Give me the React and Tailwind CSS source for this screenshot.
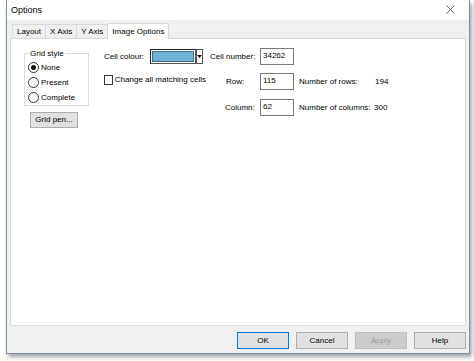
const font = { fontFamily: '"Liberation Sans", Arial, sans-serif' };

function Radio({ label, checked }) {
  return (
    <div className="flex items-center h-[15px] gap-[2px]">
      <span className="w-[11px] h-[11px] rounded-full border border-[#333] bg-white flex items-center justify-center">
        {checked && <span className="w-[5px] h-[5px] rounded-full bg-[#111]" />}
      </span>
      <span>{label}</span>
    </div>
  );
}

function Field({ value }) {
  return (
    <div className="w-[34px] h-[17px] border border-[#7a7a7a] bg-white px-[2px] pt-[1px] leading-[11px]">
      {value}
    </div>
  );
}

function Btn({ children, primary, disabled }) {
  return (
    <div
      className={
        'w-[52px] h-[17px] flex items-center justify-center border ' +
        (primary
          ? 'border-[#0078d7] bg-[#e1e1e1] text-black'
          : disabled
          ? 'border-[#bfbfbf] bg-[#cccccc] text-[#9a9a9a]'
          : 'border-[#adadad] bg-[#e1e1e1] text-black')
      }
    >
      {children}
    </div>
  );
}

export default function App() {
  return (
    <div className="w-[474px] h-[361px] bg-white text-[8px] text-black whitespace-nowrap" style={font}>
      <div className="ml-[6px] w-[464px] h-[354px] flex flex-col border-x border-b border-[#7590b5] shadow-[2px_3px_4px_rgba(0,0,0,0.35)]">
        {/* title bar */}
        <div className="h-[20px] bg-white flex items-start justify-between pl-[4px] pr-[14px] pt-[4px]">
          <span className="text-[9px]">Options</span>
          <svg width="9" height="9" viewBox="0 0 9 9" className="mt-[1px]">
            <path d="M0.5 0.5L8.5 8.5M8.5 0.5L0.5 8.5" stroke="#555" strokeWidth="0.9" />
          </svg>
        </div>

        <div className="flex-1 bg-[#f0f0f0] flex flex-col px-[3px]">
          {/* tabs */}
          <div className="h-[18px] flex items-end pl-[2px]">
            <div className="h-[14px] px-[4px] border border-b-0 border-[#d9d9d9] bg-[#f0f0f0] flex items-center">Layout</div>
            <div className="h-[14px] px-[4px] border border-b-0 border-l-0 border-[#d9d9d9] bg-[#f0f0f0] flex items-center">X Axis</div>
            <div className="h-[14px] px-[4px] border border-b-0 border-l-0 border-[#d9d9d9] bg-[#f0f0f0] flex items-center">Y Axis</div>
            <div className="h-[16px] px-[4px] border border-b-0 border-l-0 border-[#d9d9d9] bg-white flex items-center -mb-px relative z-10">Image Options</div>
          </div>

          {/* panel */}
          <div className="h-[288px] w-[456px] bg-white border border-[#d9d9d9] flex pt-[9px]">
            {/* left column */}
            <div className="ml-[13px] w-[66px] flex flex-col">
              <div className="relative mt-[5px] w-[65px] h-[53px] border border-[#dcdcdc] pt-[6px] pl-[3px]">
                <span className="absolute -top-[6px] left-[4px] bg-white px-[1px]">Grid style</span>
                <Radio label="None" checked />
                <Radio label="Present" />
                <Radio label="Complete" />
              </div>
              <div className="ml-[6px] mt-[6px] w-[48px] h-[16px] border border-[#adadad] bg-[#e1e1e1] flex items-center justify-center">
                Grid pen...
              </div>
            </div>

            {/* middle column */}
            <div className="ml-[14px] w-[102px] flex flex-col">
              <div className="h-[17px] flex items-center">
                <span className="w-[46px]">Cell colour:</span>
                <div className="w-[46px] h-[15px] border border-[#555] border-t-[#222] border-l-[#222] p-[1px] bg-white">
                  <div className="w-full h-full bg-[#6eb2d6] border border-[#3d6f8e]" />
                </div>
                <div className="w-[7px] h-[15px] border border-[#555] bg-white flex items-center justify-center">
                  <svg width="5" height="3" viewBox="0 0 5 3"><path d="M0 0h5L2.5 3z" fill="#111" /></svg>
                </div>
              </div>
              <div className="mt-[9px] h-[12px] flex items-center gap-[2px]">
                <span className="w-[10px] h-[10px] border border-[#333] bg-white" />
                <span>Change all matching cells</span>
              </div>
            </div>

            {/* right column */}
            <div className="ml-[4px] flex flex-col">
              <div className="h-[17px] flex items-center">
                <span className="w-[50px]">Cell number:</span>
                <Field value="34262" />
              </div>
              <div className="mt-[8px] h-[17px] flex items-center">
                <span className="w-[50px] pl-[16px]">Row:</span>
                <Field value="115" />
                <span className="ml-[5px] w-[76px]">Number of rows:</span>
                <span>194</span>
              </div>
              <div className="mt-[9px] h-[17px] flex items-center">
                <span className="w-[50px] pl-[15px]">Column:</span>
                <Field value="62" />
                <span className="ml-[5px] w-[75px]">Number of columns:</span>
                <span>300</span>
              </div>
            </div>
          </div>

          {/* buttons */}
          <div className="flex justify-end gap-[7px] mt-[6px] pr-[0px]">
            <Btn primary>OK</Btn>
            <Btn>Cancel</Btn>
            <Btn disabled>Apply</Btn>
            <Btn>Help</Btn>
          </div>
        </div>
      </div>
    </div>
  );
}
